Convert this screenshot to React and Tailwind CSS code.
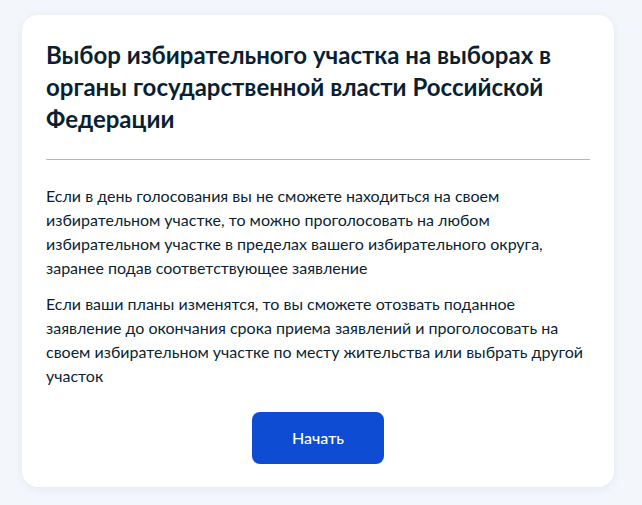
export default function App() {
  return (
    <div
      className="min-h-[505px] bg-[#f3f6fb] pt-[15px] pb-[18px]"
      style={{ fontFamily: "Lato, 'Noto Sans', sans-serif" }}
    >
      <div className="ml-[22px] w-[592px] rounded-2xl bg-white px-6 pt-6 pb-[23px] shadow-[0_2px_8px_rgba(56,92,160,0.08)]">
        <h1 className="text-[24px] font-bold leading-8 text-[#0b1f33]">
          Выбор избирательного участка на выборах в органы государственной власти Российской Федерации
        </h1>
        <div className="mt-6 h-px bg-[#a7b6e3]" />
        <div className="mt-6 text-[16px] leading-6 text-[#0b1f33]">
          <p>
            Если в день голосования вы не сможете находиться на своем избирательном участке, то можно проголосовать на любом избирательном участке в пределах вашего избирательного округа, заранее подав соответствующее заявление
          </p>
          <p className="mt-3">
            Если ваши планы изменятся, то вы сможете отозвать поданное заявление до окончания срока приема заявлений и проголосовать на своем избирательном участке по месту жительства или выбрать другой участок
          </p>
        </div>
        <div className="mt-6 flex justify-center">
          <button
            type="button"
            className="h-[52px] w-[132px] rounded-lg bg-[#0d4cd3] text-[16px] font-medium text-white"
          >
            Начать
          </button>
        </div>
      </div>
    </div>
  );
}
